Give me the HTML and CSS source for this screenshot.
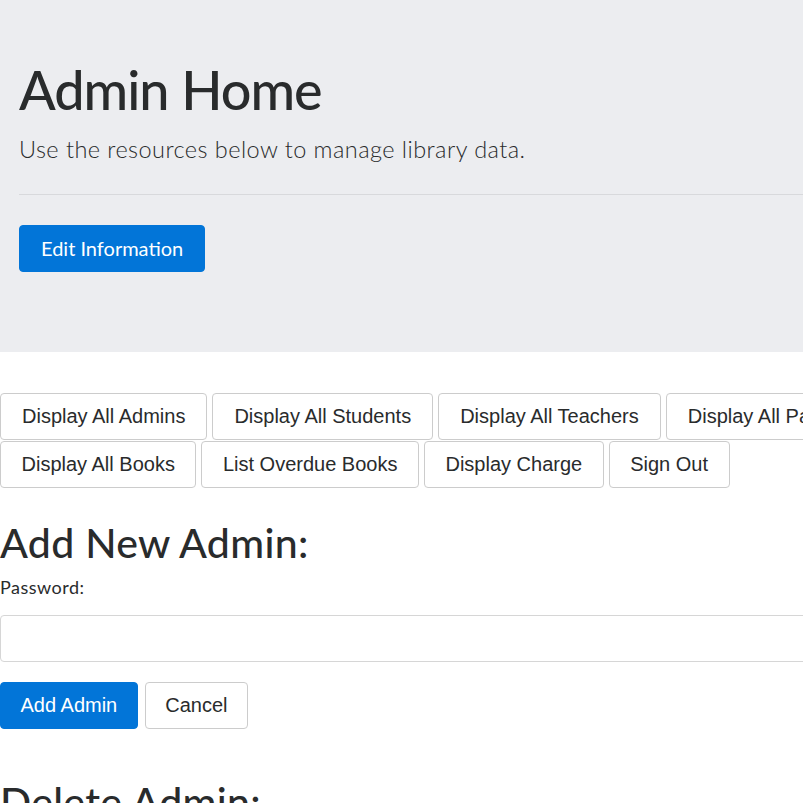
FILE: index.html
```html
<!DOCTYPE html>
<html lang="en">
<head>
<meta charset="utf-8">
<title>Admin Home</title>
<link rel="stylesheet" href="styles.css">
</head>
<body>
<div class="page">
  <header class="jumbotron">
    <h1 class="display">Admin Home</h1>
    <p class="lead">Use the resources below to manage library data.</p>
    <hr class="divider">
    <button class="btn btn-primary btn-lg">Edit Information</button>
  </header>

  <nav class="actions">
    <button class="btn btn-default">Display All Admins</button>
    <button class="btn btn-default">Display All Students</button>
    <button class="btn btn-default">Display All Teachers</button>
    <button class="btn btn-default">Display All Patrons</button>
    <button class="btn btn-default btn-tight">Display All Books</button>
    <button class="btn btn-default btn-tight">List Overdue Books</button>
    <button class="btn btn-default btn-tight">Display Charge</button>
    <button class="btn btn-default btn-tight">Sign Out</button>
  </nav>

  <section class="form-section">
    <h2 class="section-title">Add New Admin:</h2>
    <label class="field-label" for="pw">Password:</label>
    <input class="form-control" id="pw" type="password">
    <div class="form-actions">
      <button class="btn btn-blue">Add Admin</button>
      <button class="btn btn-default">Cancel</button>
    </div>
  </section>

  <section class="form-section">
    <h2 class="section-title">Delete Admin:</h2>
  </section>
</div>
</body>
</html>
```
FILE: styles.css
```css
html, body {
  margin: 0;
  padding: 0;
  overflow: hidden;
  background: #fff;
}
body {
  font-family: Lato, "Open Sans", sans-serif;
  color: #292b2c;
  font-size: 16px;
}
.page {
  width: 1000px;
}
.jumbotron {
  background: #ecedf0;
  padding: 58px 19px 80px;
}
.display {
  margin: 0;
  font-size: 54px;
  font-weight: 500;
  line-height: 1.2;
  letter-spacing: -1px;
}
.lead {
  margin: 9px 0 0;
  font-size: 23.5px;
  font-weight: 300;
  line-height: 1.5;
  letter-spacing: 0.45px;
}
.divider {
  margin: 27px 0 30px;
  border: 0;
  border-top: 1px solid #d8d9dc;
}
.btn {
  font-family: "Liberation Sans", Arial, sans-serif;
  font-size: 20px;
  line-height: 25px;
  padding: 10px 21px;
  border-radius: 4px;
  border: 1px solid #ccc;
  background: #fff;
  color: #292b2c;
  cursor: pointer;
}
.btn-tight {
  padding: 10px 20.5px;
}
.btn-lg {
  font-family: Lato, "Open Sans", sans-serif;
  font-size: 20px;
  padding: 10px 21px;
  line-height: 25px;
}
.btn-primary, .btn-blue {
  background: #0275d8;
  border-color: #0275d8;
  color: #fff;
}
.actions {
  display: flex;
  flex-wrap: wrap;
  column-gap: 5px;
  row-gap: 1px;
  width: 900px;
  margin-top: 41px;
}
.section-title {
  margin: 30px 0 0;
  font-size: 41px;
  font-weight: 500;
  line-height: 1.2;
  letter-spacing: 0.3px;
}
.field-label {
  display: block;
  margin-top: 7px;
  font-size: 18px;
  line-height: 1.5;
  letter-spacing: 0.5px;
}
.form-control {
  display: block;
  box-sizing: border-box;
  width: 100%;
  height: 47px;
  margin-top: 14px;
  border: 1px solid #d6d6d6;
  border-radius: 4px;
  background: #fff;
}
.form-actions {
  display: flex;
  gap: 7px;
  margin-top: 20px;
}
.form-actions .btn {
  padding: 10px 19.5px;
}
.form-section + .form-section .section-title {
  margin-top: 48px;
}
```
